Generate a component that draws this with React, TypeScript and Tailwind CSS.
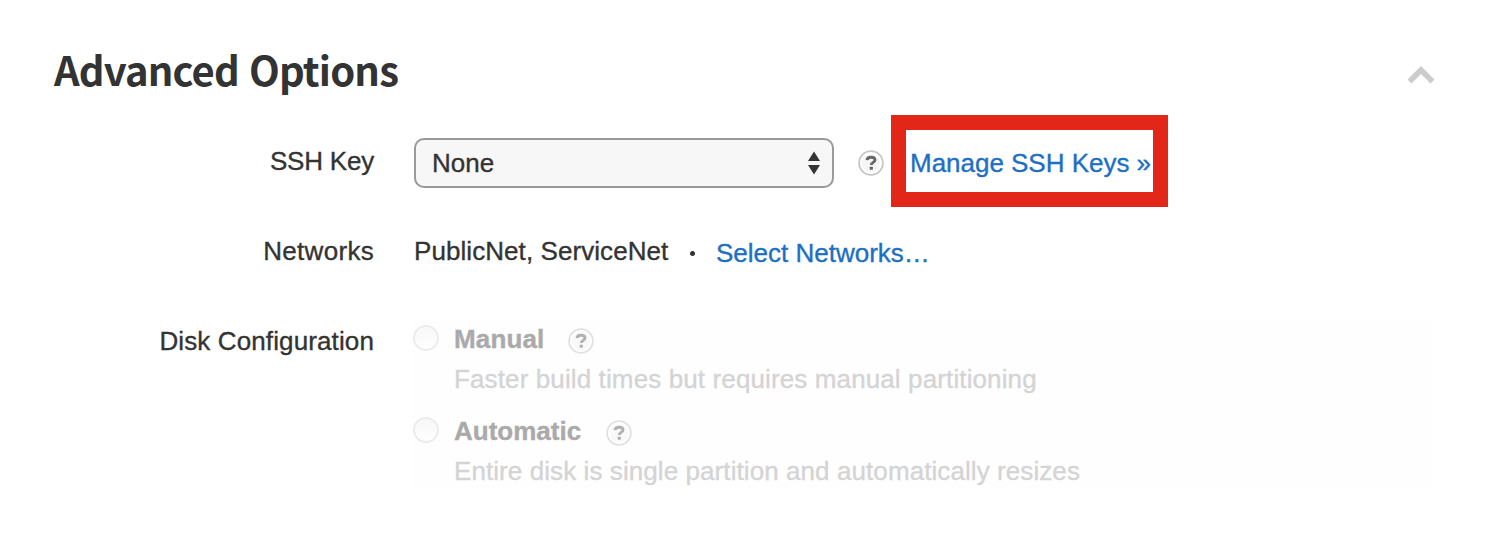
import React from "react";

function HelpIcon({ className = "" }: { className?: string }) {
  return (
    <svg className={`h-[26px] w-[26px] shrink-0 ${className}`} viewBox="0 0 26 26" fill="none">
      <circle cx="13" cy="13" r="11.9" fill="#fff" stroke="#c6c6c6" strokeWidth="1.8" />
      <circle cx="13" cy="13" r="9" fill="#f5f5f5" />
      <path d="M9 10.200C9.200 8.200 10.800 7.200 13 7.200c2.400 0 4 1 4 2.900 0 2.400-3.700 2.200-3.700 4.900" stroke="#666" strokeWidth="2.900" />
      <rect x="11.700" y="16.700" width="3.200" height="3" rx="0.600" fill="#666" />
    </svg>
  );
}

function Row({
  label,
  labelClass,
  className,
  children,
}: {
  label: string;
  labelClass: string;
  className: string;
  children: React.ReactNode;
}) {
  return (
    <div className={`flex ${className}`}>
      <div className={`mr-10 w-[374px] shrink-0 text-right leading-10 ${labelClass}`}>{label}</div>
      {children}
    </div>
  );
}

function DiskOption({
  title,
  description,
  titleClass,
  descriptionClass,
}: {
  title: string;
  description: string;
  titleClass: string;
  descriptionClass: string;
}) {
  return (
    <label className="flex h-[92px]">
      <span className="mt-[7px] h-[26px] w-[26px] shrink-0 rounded-full border-2 border-[#ececec] bg-linear-to-b from-[#f8f8f8] to-[#fefefe]" />
      <span className="ml-[15px] block">
        <span className="flex h-10 items-start">
          <span className={`mt-px font-bold leading-10 text-[#aaa] ${titleClass}`}>{title}</span>
          <HelpIcon className="mt-[10px] opacity-50" />
        </span>
        <span className={`mt-px block whitespace-nowrap leading-10 text-[#d4d4d4] ${descriptionClass}`}>{description}</span>
      </span>
    </label>
  );
}

export default function App() {
  return (
    <main className="h-[545px] w-[1486px] overflow-hidden bg-white font-['Liberation_Sans',Arial,sans-serif] text-[26px] text-[#333] [-webkit-text-stroke:0.35px_currentColor]">
      <header className="flex h-[115px] items-start justify-between pl-[54px] pr-[51px]">
        <h2 className="mt-[39px] h-[60px] whitespace-nowrap font-['Noto_Sans_CJK_JP',sans-serif] text-[40px] font-bold leading-[60px] tracking-[-0.85px] [-webkit-text-stroke:0] [word-spacing:2px]">
          Advanced Options
        </h2>
        <svg className="mt-[64px] h-5 w-7" viewBox="0 0 28 20" fill="none">
          <path d="M2.5 17.5 14 6l11.500 11.500" stroke="#ccc" strokeWidth="5.5" />
        </svg>
      </header>

      <Row label="SSH Key" labelClass="tracking-[-0.2px]" className="h-[92px] pt-[26px]">
        <div className="-mt-[26px] flex h-[92px]">
          <button className="mt-[23px] flex h-[50px] w-[420px] items-center justify-between rounded-[10px] border-2 border-[#999] bg-[#f7f7f7] pl-4 pr-3">
            <span>None</span>
            <svg className="h-6 w-3" viewBox="0 0 12 24">
              <path d="M6 0.500 12 10H0zM6 23.500 12 14H0z" fill="#333" />
            </svg>
          </button>
          <HelpIcon className="ml-6 mt-[35px]" />
          <div className="ml-[7px] flex h-[92px] w-[277px] items-center border-[15px] border-[#e22718] pl-1">
            <a className="mt-1 whitespace-nowrap tracking-[-0.02px] text-[#1d6fc4]">Manage SSH Keys »</a>
          </div>
        </div>
      </Row>

      <Row label="Networks" labelClass="tracking-[0.3px]" className="h-[111px] pt-6">
        <span className="flex h-10 w-[302px] items-center whitespace-nowrap leading-10 tracking-[0.07px]">
          PublicNet, ServiceNet
          <span className="ml-[22px] mt-1 h-[5px] w-[5px] rounded-full bg-[#333]" />
        </span>
        <a className="mt-0.5 whitespace-nowrap leading-10 text-[#1d6fc4]">Select Networks…</a>
      </Row>

      <Row label="Disk Configuration" labelClass="tracking-[0.12px]" className="h-[172px] pt-[3px]">
        <div className="-ml-[1px] -mt-[3px] h-[172px] w-[1019px] bg-[#fefefe]">
          <DiskOption
            title="Manual"
            description="Faster build times but requires manual partitioning"
            titleClass="w-[114px] tracking-[0.15px]"
            descriptionClass="tracking-[0.12px]"
          />
          <DiskOption
            title="Automatic"
            description="Entire disk is single partition and automatically resizes"
            titleClass="w-[152px]"
            descriptionClass="tracking-[0.08px]"
          />
        </div>
      </Row>
    </main>
  );
}
